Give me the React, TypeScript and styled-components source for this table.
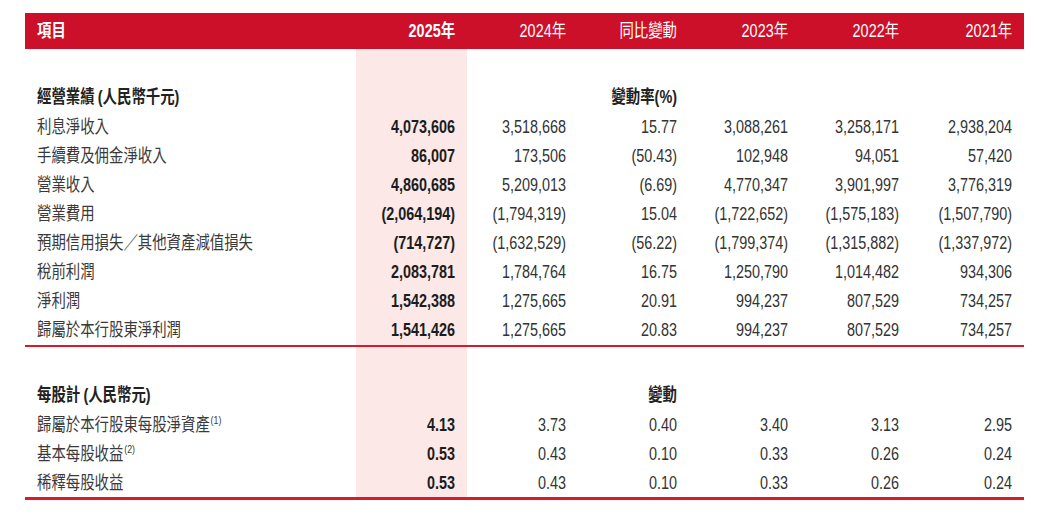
import React from "react";
import styled, { createGlobalStyle } from "styled-components";

// === Global ===

const GlobalStyle = createGlobalStyle`
  html, body {
    margin: 0;
    padding: 0;
    background: #ffffff;
  }
  body {
    font-family: "Liberation Sans", "Noto Sans CJK TC", sans-serif;
    font-size: 18px;
    color: #2b2b2b;
  }
`;

const RED = "#cc1029";
const LINE_RED = "#d9192c";
const PINK = "#fbe8e7";
const COLS = "331px 111px 111px 111px 111px 111px 113px";

// === Styles ===

const Page = styled.div`
  padding: 13px 0 0 25px;
  width: 999px;
`;

const Row = styled.div<{ $h: number; $head?: boolean }>`
  display: grid;
  grid-template-columns: ${COLS};
  height: ${(p) => p.$h}px;
  background: ${(p) => (p.$head ? RED : "transparent")};
`;

const Cell = styled.div<{ $hl?: boolean; $left?: boolean }>`
  display: flex;
  align-items: center;
  justify-content: ${(p) => (p.$left ? "flex-start" : "flex-end")};
  padding: ${(p) => (p.$left ? "0 0 0 12px" : "0 12px 0 0")};
  background: ${(p) => (p.$hl ? PINK : "transparent")};
  white-space: nowrap;
`;

// condensed face imitation: the source uses a narrow sans
const Text = styled.span<{
  $bold?: boolean;
  $left?: boolean;
  $color?: string;
}>`
  display: inline-block;
  transform: scaleX(0.8);
  transform-origin: ${(p) => (p.$left ? "left" : "right")} center;
  font-weight: ${(p) => (p.$bold ? 700 : 400)};
  color: ${(p) => p.$color || "#333333"};
  line-height: 1;
  letter-spacing: 0;
`;

const Paren = styled.span`
  margin-left: 4px;
`;

const Sup = styled.sup`
  font-size: 11px;
  vertical-align: 7px;
  margin-left: 1px;
  line-height: 0;
`;

const Rule = styled.div<{ $w: number }>`
  height: ${(p) => p.$w}px;
  background: ${LINE_RED};
  width: 999px;
`;

// === Data ===

const years = ["2024年", "同比變動", "2023年", "2022年", "2021年"];

type Line = { label: string; sup?: string; v: string[] };

const results: Line[] = [
  { label: "利息淨收入", v: ["4,073,606", "3,518,668", "15.77", "3,088,261", "3,258,171", "2,938,204"] },
  { label: "手續費及佣金淨收入", v: ["86,007", "173,506", "(50.43)", "102,948", "94,051", "57,420"] },
  { label: "營業收入", v: ["4,860,685", "5,209,013", "(6.69)", "4,770,347", "3,901,997", "3,776,319"] },
  { label: "營業費用", v: ["(2,064,194)", "(1,794,319)", "15.04", "(1,722,652)", "(1,575,183)", "(1,507,790)"] },
  { label: "預期信用損失／其他資產減值損失", v: ["(714,727)", "(1,632,529)", "(56.22)", "(1,799,374)", "(1,315,882)", "(1,337,972)"] },
  { label: "稅前利潤", v: ["2,083,781", "1,784,764", "16.75", "1,250,790", "1,014,482", "934,306"] },
  { label: "淨利潤", v: ["1,542,388", "1,275,665", "20.91", "994,237", "807,529", "734,257"] },
  { label: "歸屬於本行股東淨利潤", v: ["1,541,426", "1,275,665", "20.83", "994,237", "807,529", "734,257"] },
];

const perShare: Line[] = [
  { label: "歸屬於本行股東每股淨資產", sup: "(1)", v: ["4.13", "3.73", "0.40", "3.40", "3.13", "2.95"] },
  { label: "基本每股收益", sup: "(2)", v: ["0.53", "0.43", "0.10", "0.33", "0.26", "0.24"] },
  { label: "稀釋每股收益", v: ["0.53", "0.43", "0.10", "0.33", "0.26", "0.24"] },
];

// === Parts ===

const Spacer: React.FC<{ h: number }> = ({ h }) => (
  <Row $h={h}>
    <Cell />
    <Cell $hl />
  </Row>
);

const SectionTitle: React.FC<{ title: string; unit: string; change: string }> = ({
  title,
  unit,
  change,
}) => (
  <Row $h={30}>
    <Cell $left>
      <Text $left $bold $color="#222">
        {title}
        <Paren>({unit})</Paren>
      </Text>
    </Cell>
    <Cell $hl />
    <Cell />
    <Cell>
      <Text $bold $color="#222">
        {change}
      </Text>
    </Cell>
  </Row>
);

const DataRow: React.FC<{ line: Line }> = ({ line }) => (
  <Row $h={29}>
    <Cell $left>
      <Text $left $color="#3a3a3a">
        {line.label}
        {line.sup && <Sup>{line.sup}</Sup>}
      </Text>
    </Cell>
    {line.v.map((n, i) => (
      <Cell key={i} $hl={i === 0}>
        <Text $bold={i === 0} $color={i === 0 ? "#1c1c1c" : "#333"}>
          {n}
        </Text>
      </Cell>
    ))}
  </Row>
);

// === App ===

const App: React.FC = () => (
  <>
    <GlobalStyle />
    <Page>
      <Row $h={36} $head>
        <Cell $left>
          <Text $left $bold $color="#fff">
            項目
          </Text>
        </Cell>
        <Cell>
          <Text $bold $color="#fff">
            2025年
          </Text>
        </Cell>
        {years.map((y) => (
          <Cell key={y}>
            <Text $color="#fff">{y}</Text>
          </Cell>
        ))}
      </Row>

      <Spacer h={33} />
      <SectionTitle title="經營業績" unit="人民幣千元" change="變動率(%)" />
      {results.map((l) => (
        <DataRow key={l.label} line={l} />
      ))}
      <Spacer h={1} />
      <Rule $w={2} />

      <Spacer h={33} />
      <SectionTitle title="每股計" unit="人民幣元" change="變動" />
      {perShare.map((l) => (
        <DataRow key={l.label} line={l} />
      ))}
      <Rule $w={3} />
    </Page>
  </>
);

export default App;
